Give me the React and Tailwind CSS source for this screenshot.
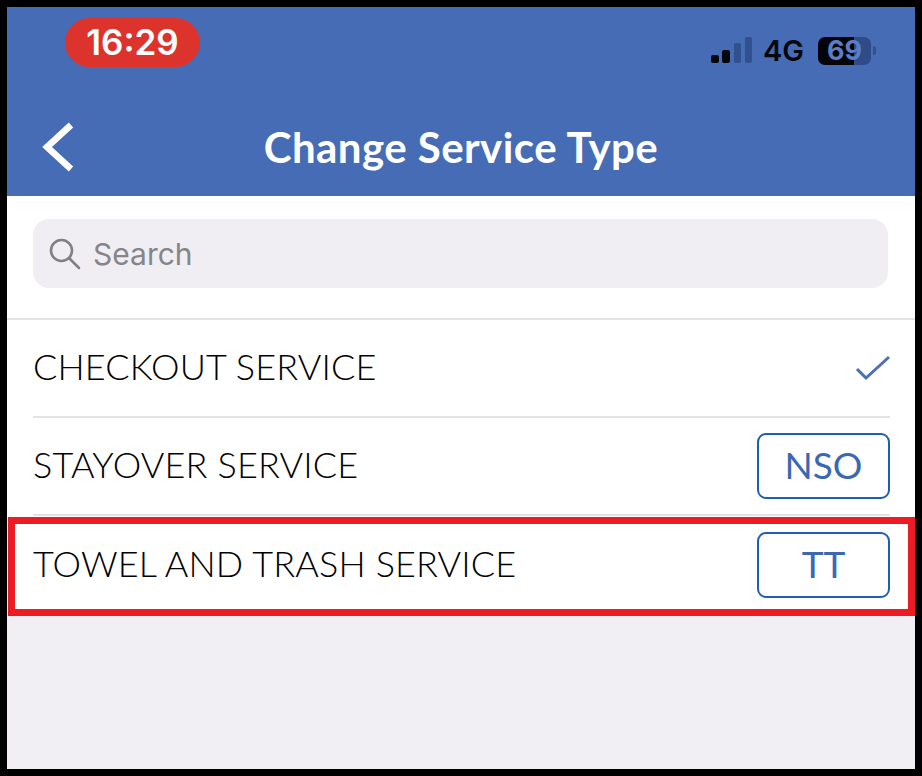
import React from 'react';

const avenir = 'font-["Lato",sans-serif]';

const Row = ({ label, children, inset = 'pl-[26px] pr-[25px]' }) => (
  <div className={`flex h-full items-center justify-between ${inset}`}>
    <span className={`${avenir} pb-[4px] text-[36px] font-light leading-none text-black tracking-[0.15px]`}>{label}</span>
    {children}
  </div>
);

const Tag = ({ text }) => (
  <div className={`${avenir} flex h-[66px] w-[133px] items-center justify-center rounded-[9px] border-2 border-[#1f5fb0] pb-[3px] text-[37px] leading-none text-[#3b68b3]`}>
    {text}
  </div>
);

const SignalBars = () => (
  <svg width="42" height="27" viewBox="0 0 42 27">
    <rect x="0" y="18" width="8" height="8" rx="2" fill="#05070f" />
    <rect x="11" y="13" width="8" height="13" rx="2" fill="#05070f" />
    <rect x="23" y="6" width="7" height="20" rx="2" fill="#30508e" />
    <rect x="34" y="0" width="7" height="26" rx="2" fill="#30508e" />
  </svg>
);

const App = () => {
  return (
    <div className="h-[776px] w-[922px] bg-black p-[7px]">
      <div className="flex h-full flex-col bg-[#f1eff3]">
        <div className="h-[189px] shrink-0 bg-[#466cb5]">
          <div className="flex h-[80px] items-start justify-between">
            <div className='ml-[58px] mt-[11px] flex h-[49px] w-[135px] items-center justify-center rounded-full bg-[#dc342d] font-["Inter",sans-serif] text-[35px] font-semibold leading-none text-white'>
              16:29
            </div>
            <div className="mr-[39px] mt-[29px] flex items-center">
              <SignalBars />
              <span className='ml-[10px] font-["Inter",sans-serif] text-[29px] font-semibold leading-none text-[#05070f]'>4G</span>
              <div className='ml-[14px] flex h-[28px] w-[53px] items-center justify-center rounded-[7px] bg-[linear-gradient(90deg,#02040a_68%,#2f4c88_68%)] font-["Inter",sans-serif] text-[27px] font-bold leading-none text-[#5a7dc4]'>
                69
              </div>
              <div className="ml-[2px] h-[9px] w-[3px] rounded-r-full bg-[#30508e]" />
            </div>
          </div>
          <div className="flex h-[109px] items-center pt-[11px]">
            <svg className="ml-[35px] shrink-0" width="32" height="50" viewBox="0 0 32 50" fill="none">
              <path d="M29 3 L5 25 L29 47" stroke="#fff" strokeWidth="6.5" />
            </svg>
            <div className={`${avenir} -ml-[10px] flex-1 pr-[57px] text-center text-[42px] font-bold leading-none text-white tracking-[0.44px]`}>
              Change Service Type
            </div>
          </div>
        </div>

        <div className="h-[124px] shrink-0 border-b-2 border-[#e4e2e6] bg-white pl-[26px] pr-[27px] pt-[23px]">
          <div className="flex h-[69px] items-center rounded-[16px] bg-[#f0eef2] pl-[16px]">
            <svg width="32" height="32" viewBox="0 0 32 32" fill="none" stroke="#7f7f84" strokeWidth="2.6" strokeLinecap="round">
              <circle cx="12.5" cy="12.5" r="10.5" />
              <path d="M20.5 20.5 L30 30" />
            </svg>
            <span className='ml-[12px] font-["Inter",sans-serif] text-[30px] leading-none text-[#85858a]'>Search</span>
          </div>
        </div>

        <div className="h-[96px] shrink-0 bg-white">
          <Row label="CHECKOUT SERVICE">
            <svg className="mr-[-1px]" width="36" height="26" viewBox="0 0 36 26" fill="none">
              <path d="M2 14 L11 23 L34 2" stroke="#4a70b6" strokeWidth="3" />
            </svg>
          </Row>
        </div>
        <div className="shrink-0 bg-white pl-[26px] pr-[25px]">
          <div className="h-[2px] bg-[#e4e2e6]" />
        </div>
        <div className="h-[96px] shrink-0 bg-white">
          <Row label="STAYOVER SERVICE">
            <Tag text="NSO" />
          </Row>
        </div>
        <div className="shrink-0 bg-white pb-[1px] pl-[26px] pr-[25px]">
          <div className="h-[2px] bg-[#e4e2e6]" />
        </div>
        <div className="ml-[1px] h-[99px] shrink-0 border-[7px] border-[#ed1c24] bg-white">
          <div className="h-full pb-[3px]">
            <Row label="TOWEL AND TRASH SERVICE" inset="pl-[18px] pr-[18px]">
              <Tag text="TT" />
            </Row>
          </div>
        </div>
      </div>
    </div>
  );
};

export default App;
